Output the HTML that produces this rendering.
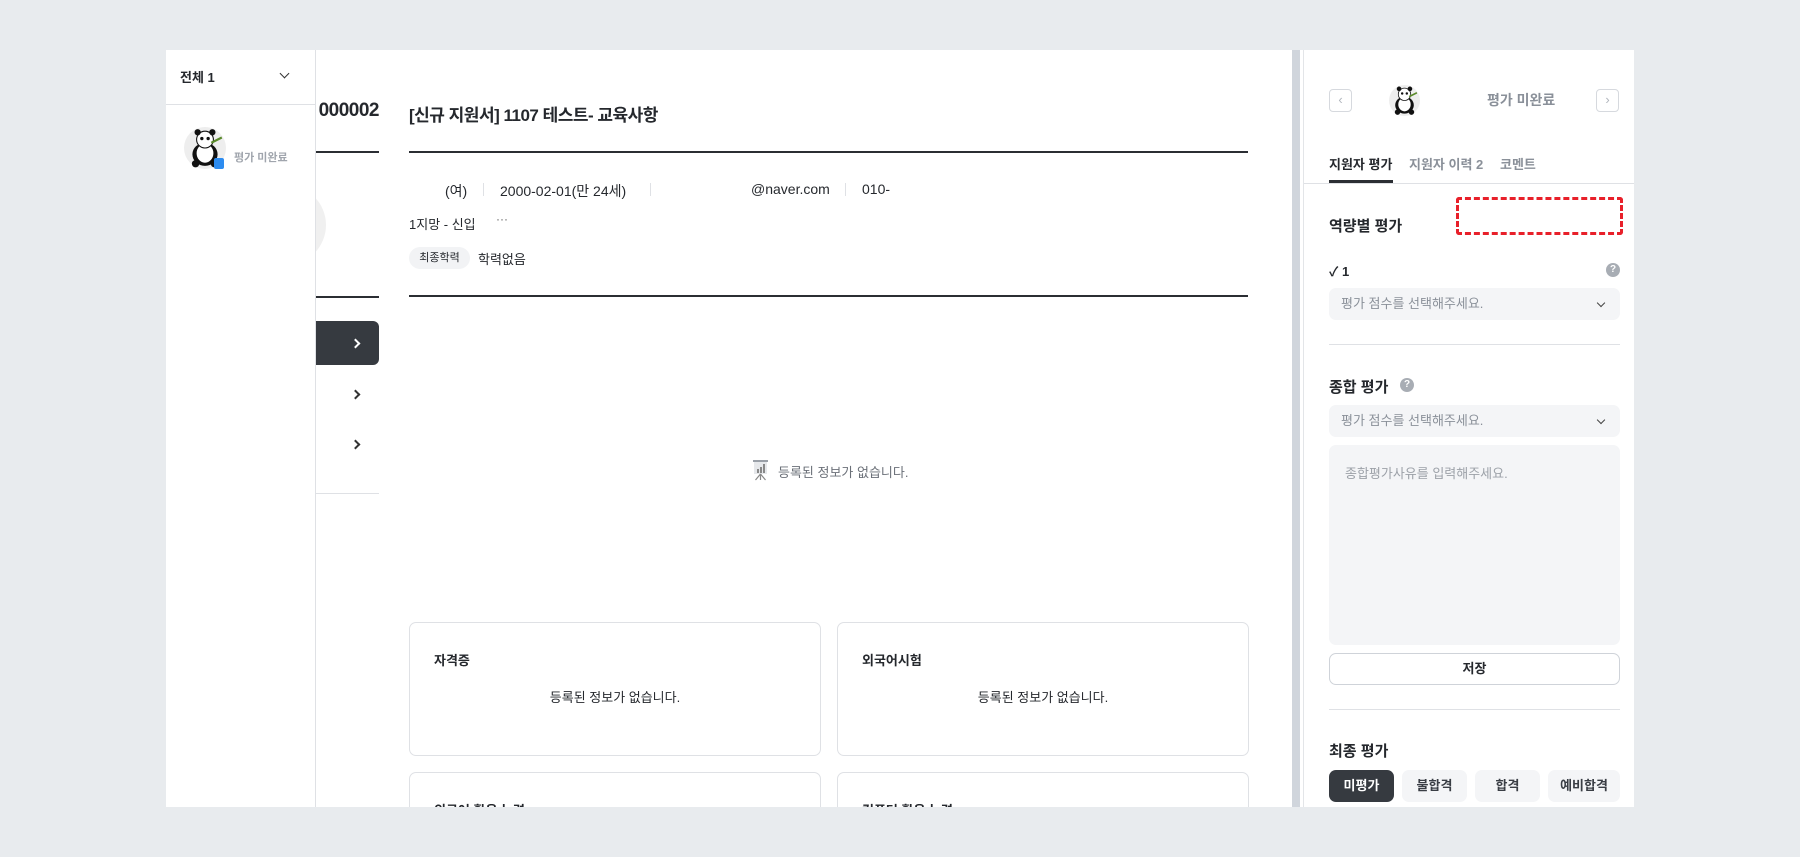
<!DOCTYPE html>
<html><head><meta charset="utf-8"><style>
*{margin:0;padding:0;box-sizing:border-box}
html,body{width:1800px;height:857px;overflow:hidden}
body{background:#e8ebee;font-family:"Liberation Sans","Noto Sans CJK KR",sans-serif;color:#25282d;position:relative}
.a{position:absolute;white-space:nowrap}
#wrap{position:absolute;left:166px;top:50px;width:1468px;height:757px;background:#fff;overflow:hidden}
.sel{position:absolute;left:25px;width:291px;height:32px;background:#f4f5f7;border-radius:7px;font-size:13px;color:#8a9099;line-height:32px;padding-left:12px}
.sel:after{content:"";position:absolute;right:16px;top:12px;width:5px;height:5px;border-right:1.5px solid #444;border-bottom:1.5px solid #444;transform:rotate(45deg)}
.card{position:absolute;width:412px;border:1px solid #dfe1e5;border-radius:7px;background:#fff}
.card .t{position:absolute;left:24px;top:27px;font-size:13px;font-weight:bold}
.card .m{position:absolute;left:0;right:0;top:64px;text-align:center;font-size:13px}
.btn{position:absolute;top:720px;height:32px;border-radius:7px;background:#f4f5f7;font-size:13px;font-weight:bold;text-align:center;line-height:32px;color:#3a3e45}
.chev{position:absolute;width:7px;height:7px;border-right:2px solid #333;border-top:2px solid #333;transform:rotate(45deg)}
</style></head><body>
<div id="wrap">
<div class="a" style="left:138px;top:14px;font-size:16px;color:#333;letter-spacing:-2px">&lsaquo;&lsaquo;</div>
<div class="a" style="left:100px;top:50px;width:113px;text-align:right;font-size:19px;font-weight:bold;letter-spacing:-0.5px">000002</div>
<div class="a" style="left:150px;top:101px;width:63px;height:2px;background:#2b2e33"></div>
<div class="a" style="left:80px;top:135px;width:80px;height:80px;border-radius:50%;background:#f0f0f0"></div>
<div class="a" style="left:150px;top:246px;width:63px;height:2px;background:#2b2e33"></div>
<div class="a" style="left:150px;top:271px;width:63px;height:44px;background:#363a40;border-radius:0 6px 6px 0"></div>
<div class="chev" style="left:186px;top:290px;border-color:#fff"></div>
<div class="chev" style="left:186px;top:341px"></div>
<div class="chev" style="left:186px;top:391px"></div>
<div class="a" style="left:150px;top:443px;width:63px;height:1px;background:#dfe1e5"></div>
<div class="a" style="left:0;top:0;width:150px;height:757px;background:#fff;border-right:1px solid #dfe1e5">
 <div class="a" style="left:14px;top:17px;font-size:13px;font-weight:bold">전체 1</div>
 <div class="a" style="left:115px;top:20px;width:7px;height:7px;border-right:1.5px solid #333;border-bottom:1.5px solid #333;transform:rotate(45deg)"></div>
 <div class="a" style="left:0;top:54px;width:150px;height:1px;background:#dfe1e5"></div>
 <svg class="a" style="left:18px;top:77px" width="42" height="42" viewBox="0 0 40 40"><circle cx="20" cy="20" r="20" fill="#eee"/><ellipse cx="20" cy="26" rx="12" ry="11" fill="#111"/><ellipse cx="20" cy="25" rx="8" ry="9" fill="#fff"/><circle cx="20" cy="12" r="8" fill="#fff" stroke="#111"/><circle cx="13" cy="5" r="3" fill="#111"/><circle cx="27" cy="5" r="3" fill="#111"/><circle cx="17" cy="11" r="1.6" fill="#111"/><circle cx="23" cy="11" r="1.6" fill="#111"/><path d="M26 15l10-5" stroke="#5a8a2a" stroke-width="2"/><circle cx="11" cy="35" r="3.5" fill="#111"/><circle cx="29" cy="35" r="3.5" fill="#111"/></svg>
 <div class="a" style="left:48px;top:108px;width:10px;height:11px;background:#2d8cf0;border-radius:2px"></div>
 <div class="a" style="left:68px;top:99px;font-size:11px;color:#a0a5ad;font-weight:bold">평가 미완료</div>
</div>
<div class="a" style="left:243px;top:51px;font-size:17px;font-weight:bold;letter-spacing:-0.5px">[신규 지원서] 1107 테스트- 교육사항</div>
<div class="a" style="left:243px;top:101px;width:839px;height:2px;background:#2b2e33"></div>
<div class="a" style="left:279px;top:131px;font-size:14px">(여)</div>
<div class="a" style="left:317px;top:133px;width:1px;height:13px;background:#dfe1e5"></div>
<div class="a" style="left:334px;top:131px;font-size:14px">2000-02-01(만 24세)</div>
<div class="a" style="left:484px;top:133px;width:1px;height:13px;background:#dfe1e5"></div>
<div class="a" style="left:585px;top:131px;font-size:14px">@naver.com</div>
<div class="a" style="left:679px;top:133px;width:1px;height:13px;background:#dfe1e5"></div>
<div class="a" style="left:696px;top:131px;font-size:14px">010-</div>
<div class="a" style="left:243px;top:164px;font-size:13px">1지망 - 신입</div>
<div class="a" style="left:330px;top:162px;font-size:12px;color:#666">···</div>
<div class="a" style="left:243px;top:197px;width:61px;height:22px;border-radius:11px;background:#f2f3f5;font-size:11px;line-height:22px;text-align:center">최종학력</div>
<div class="a" style="left:312px;top:199px;font-size:13px">학력없음</div>
<div class="a" style="left:243px;top:245px;width:839px;height:2px;background:#2b2e33"></div>
<svg class="a" style="left:586px;top:410px" width="17" height="21" viewBox="0 0 17 21"><rect x="1" y="0" width="15" height="2" fill="#9aa0a8"/><rect x="2" y="2" width="13" height="12" fill="#e6e8eb"/><rect x="5" y="9" width="2" height="4" fill="#888"/><rect x="8" y="7" width="2" height="6" fill="#888"/><rect x="11" y="4" width="2" height="9" fill="#888"/><path d="M8.5 14l-5 6M8.5 14l5 6M8.5 14v6" stroke="#888" stroke-width="1.2"/></svg>
<div class="a" style="left:612px;top:412px;font-size:13px;color:#6b7078">등록된 정보가 없습니다.</div>
<div class="card" style="left:243px;top:572px;height:134px"><div class="t">자격증</div><div class="m">등록된 정보가 없습니다.</div></div>
<div class="card" style="left:671px;top:572px;height:134px"><div class="t">외국어시험</div><div class="m">등록된 정보가 없습니다.</div></div>
<div class="card" style="left:243px;top:722px;height:60px"><div class="t">외국어 활용 능력</div></div>
<div class="card" style="left:671px;top:722px;height:60px"><div class="t">컴퓨터 활용 능력</div></div>
<div class="a" style="left:1126px;top:0;width:8px;height:757px;background:#d0d5dc"></div>
<div class="a" style="left:1137px;top:0;width:1px;height:757px;background:#e3e5e8"></div>
<div class="a" style="left:1138px;top:0;width:330px;height:757px">
 <div class="a" style="left:25px;top:39px;width:23px;height:23px;border:1px solid #d6d9de;border-radius:4px;color:#b0b5bc;font-size:13px;text-align:center;line-height:20px">&lsaquo;</div>
 <div class="a" style="left:292px;top:39px;width:23px;height:23px;border:1px solid #d6d9de;border-radius:4px;color:#b0b5bc;font-size:13px;text-align:center;line-height:20px">&rsaquo;</div>
 <svg class="a" style="left:85px;top:35px" width="31" height="31" viewBox="0 0 40 40"><circle cx="20" cy="20" r="20" fill="#eee"/><ellipse cx="20" cy="26" rx="12" ry="11" fill="#111"/><ellipse cx="20" cy="25" rx="8" ry="9" fill="#fff"/><circle cx="20" cy="12" r="8" fill="#fff" stroke="#111"/><circle cx="13" cy="5" r="3" fill="#111"/><circle cx="27" cy="5" r="3" fill="#111"/><circle cx="17" cy="11" r="1.6" fill="#111"/><circle cx="23" cy="11" r="1.6" fill="#111"/><path d="M26 15l10-5" stroke="#5a8a2a" stroke-width="2"/><circle cx="11" cy="35" r="3.5" fill="#111"/><circle cx="29" cy="35" r="3.5" fill="#111"/></svg>
 <div class="a" style="left:183px;top:40px;font-size:14px;font-weight:bold;color:#8a9099">평가 미완료</div>
 <div class="a" style="left:25px;top:104px;font-size:13px;font-weight:bold">지원자 평가</div>
 <div class="a" style="left:25px;top:130px;width:64px;height:3px;background:#2b2e33"></div>
 <div class="a" style="left:105px;top:104px;font-size:13px;font-weight:bold;color:#8a9099">지원자 이력 2</div>
 <div class="a" style="left:196px;top:104px;font-size:13px;font-weight:bold;color:#8a9099">코멘트</div>
 <div class="a" style="left:0;top:133px;width:330px;height:1px;background:#dfe1e5"></div>
 <div class="a" style="left:152px;top:147px;width:167px;height:38px;border:3px dashed #e8202a;border-radius:3px"></div>
 <div class="a" style="left:25px;top:165px;font-size:15px;font-weight:bold">역량별 평가</div>
 <div class="a" style="left:25px;top:211px;font-size:13px;font-weight:bold">✓ 1</div>
 <div class="a" style="left:302px;top:213px;width:14px;height:14px;border-radius:50%;background:#a8adb4;color:#fff;font-size:10px;font-weight:bold;text-align:center;line-height:14px">?</div>
 <div class="sel" style="top:238px">평가 점수를 선택해주세요.</div>
 <div class="a" style="left:25px;top:294px;width:291px;height:1px;background:#dfe1e5"></div>
 <div class="a" style="left:25px;top:326px;font-size:15px;font-weight:bold">종합 평가</div>
 <div class="a" style="left:96px;top:328px;width:14px;height:14px;border-radius:50%;background:#a8adb4;color:#fff;font-size:10px;font-weight:bold;text-align:center;line-height:14px">?</div>
 <div class="sel" style="top:355px">평가 점수를 선택해주세요.</div>
 <div class="a" style="left:25px;top:395px;width:291px;height:200px;background:#f4f5f7;border-radius:7px;font-size:13px;color:#9ca1a8;padding:18px 16px">종합평가사유를 입력해주세요.</div>
 <div class="a" style="left:25px;top:603px;width:291px;height:32px;border:1px solid #cfd3d9;border-radius:7px;font-size:13px;font-weight:bold;text-align:center;line-height:30px">저장</div>
 <div class="a" style="left:25px;top:659px;width:291px;height:1px;background:#dfe1e5"></div>
 <div class="a" style="left:25px;top:690px;font-size:15px;font-weight:bold">최종 평가</div>
</div>
<div class="btn" style="left:1163px;width:65px;background:#363a40;color:#fff">미평가</div>
<div class="btn" style="left:1236px;width:65px">불합격</div>
<div class="btn" style="left:1309px;width:65px">합격</div>
<div class="btn" style="left:1382px;width:72px">예비합격</div>
</div>
</body></html>
